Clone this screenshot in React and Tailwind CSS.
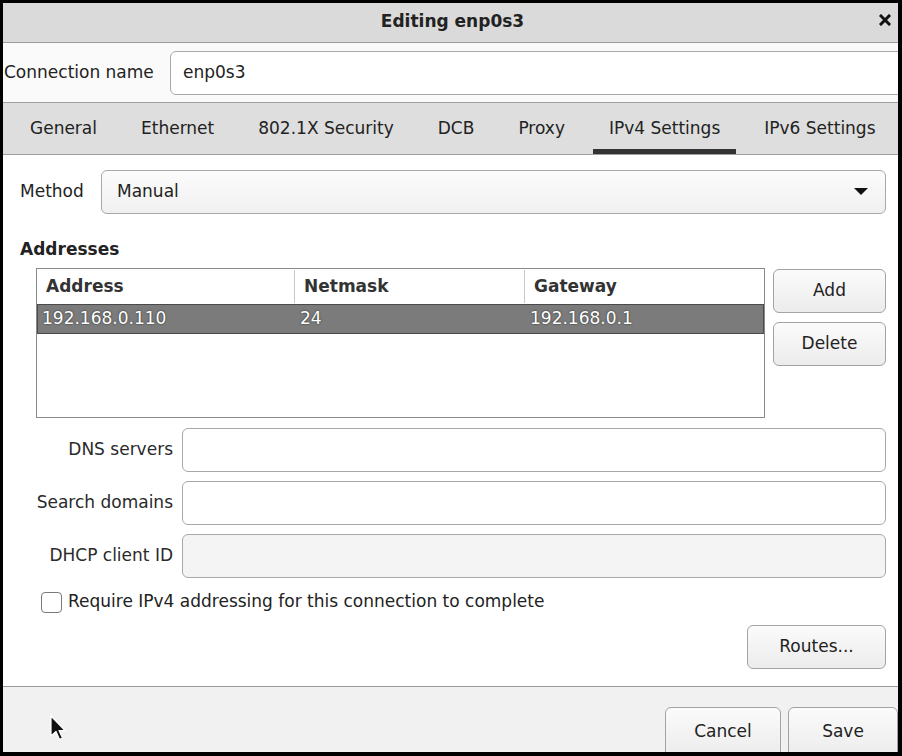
import React from 'react';

const font = { fontFamily: '"DejaVu Sans", "Liberation Sans", sans-serif' };

function Btn({ children, className = '' }) {
  return (
    <div
      className={`flex items-center justify-center rounded-[6px] border border-[#a3a3a3] bg-gradient-to-b from-[#fbfbfb] to-[#ececec] text-[17px] text-[#222] ${className}`}
    >
      {children}
    </div>
  );
}

function Field({ label, disabled }) {
  return (
    <div className="flex items-center h-[44px]">
      <div className="w-[153px] shrink-0 text-right text-[17px] text-[#2a2a2a] whitespace-nowrap">{label}</div>
      <div
        className={`ml-[9px] flex-1 h-full rounded-[6px] border border-[#a8a8a8] ${
          disabled ? 'bg-[#f4f4f4]' : 'bg-white'
        }`}
      />
    </div>
  );
}

const tabs = ['General', 'Ethernet', '802.1X Security', 'DCB', 'Proxy', 'IPv4 Settings', 'IPv6 Settings'];

export default function App() {
  return (
    <div className="w-[902px] h-[756px] bg-black pt-[3px] pl-[3px] pr-[4px] pb-[4px]" style={font}>
      <div className="flex flex-col h-full bg-white overflow-hidden relative">
        {/* title bar */}
        <div className="h-[40px] shrink-0 bg-[#dadada] border-b border-[#9c9c9c] flex items-center relative">
          <div className="flex-1 text-center font-bold text-[17px] text-[#222] pl-[4px] -mt-[2px]">Editing enp0s3</div>
          <svg className="absolute right-[7px] top-[11px]" width="12" height="12" viewBox="0 0 12 12">
            <path d="M2 2 L10 10 M10 2 L2 10" stroke="#111" strokeWidth="3" strokeLinecap="square" />
          </svg>
        </div>

        {/* connection name */}
        <div className="h-[60px] shrink-0 bg-[#fafafa] flex items-center border-b border-[#a0a0a0]">
          <div className="pl-[1px] w-[167px] shrink-0 text-[17px] text-[#222]">Connection name</div>
          <div className="flex-1 h-[44px] -mr-[10px] rounded-[6px] border border-[#a8a8a8] bg-white flex items-center pl-[12px] text-[17px] text-[#222]">
            enp0s3
          </div>
        </div>

        {/* tabs */}
        <div className="h-[52px] shrink-0 bg-[#dedede] border-b border-[#a0a0a0] flex pl-[11px] gap-[12px]">
          {tabs.map(t => (
            <div key={t} className="relative flex items-center px-[16px] text-[17px] text-[#222] whitespace-nowrap">
              {t}
              {t === 'IPv4 Settings' && (
                <div className="absolute left-0 right-0 bottom-0 h-[5px] bg-[#333]" />
              )}
            </div>
          ))}
        </div>

        {/* content */}
        <div className="flex-1 flex flex-col pl-[17px] pr-[12px] pt-[15px]">
          <div className="flex items-center h-[44px]">
            <div className="w-[81px] text-[17px] text-[#222]">Method</div>
            <div className="flex-1 h-full rounded-[6px] border border-[#a8a8a8] bg-gradient-to-b from-[#fcfcfc] to-[#f0f0f0] flex items-center pl-[15px] pr-[17px] text-[17px] text-[#222]">
              <span className="flex-1">Manual</span>
              <svg width="14" height="8" viewBox="0 0 14 8">
                <path d="M0 0 H14 L7 7 Z" fill="#111" />
              </svg>
            </div>
          </div>

          <div className="mt-[24px] font-bold text-[17px] text-[#222] leading-[22px]">Addresses</div>

          <div className="mt-[8px] flex pl-[16px] gap-[8px]">
            <div className="w-[729px] h-[150px] border border-[#8a8a8a] bg-white">
              <div className="flex h-[35px] text-[17px] font-bold text-[#333]">
                <div className="w-[258px] border-r border-[#c8c8c8] flex items-center pl-[9px] my-[1px]">Address</div>
                <div className="w-[230px] border-r border-[#c8c8c8] flex items-center pl-[9px] my-[1px]">Netmask</div>
                <div className="flex-1 flex items-center pl-[9px]">Gateway</div>
              </div>
              <div
                className="flex h-[30px] bg-[#7b7b7b] border border-[#4a4a4a] text-[17px] text-white items-center"
                style={{ textShadow: '0 0 2px #222' }}
              >
                <div className="w-[258px] pl-[4px]">192.168.0.110</div>
                <div className="w-[230px] pl-[4px]">24</div>
                <div className="flex-1 pl-[4px]">192.168.0.1</div>
              </div>
            </div>
            <div className="flex-1 flex flex-col gap-[9px] pt-[1px]">
              <Btn className="h-[44px]">Add</Btn>
              <Btn className="h-[44px]">Delete</Btn>
            </div>
          </div>

          <div className="mt-[10px] flex flex-col gap-[9px]">
            <Field label="DNS servers" />
            <Field label="Search domains" />
            <Field label="DHCP client ID" disabled />
          </div>

          <div className="mt-[13px] flex items-center pl-[21px] h-[22px]">
            <div className="w-[21px] h-[21px] rounded-[4px] border border-[#7a7a7a] bg-white" />
            <span className="ml-[6px] text-[17px] text-[#222]">Require IPv4 addressing for this connection to complete</span>
          </div>

          <div className="mt-[12px] flex justify-end">
            <Btn className="w-[139px] h-[44px]">Routes...</Btn>
          </div>
        </div>

        {/* footer */}
        <div className="h-[66px] shrink-0 bg-[#f1f1f1] border-t border-[#9a9a9a] flex justify-end items-start pt-[20px] gap-[7px] relative">
          <Btn className="w-[116px] h-[50px] rounded-b-none">Cancel</Btn>
          <Btn className="w-[110px] h-[50px] rounded-b-none">Save</Btn>
          <svg className="absolute left-[46px] top-[28px]" width="18" height="28" viewBox="0 0 18 28">
            <path d="M2 1 L2 21 L7 16.5 L10.5 24.5 L13.5 23 L10 15.5 L16 15.5 Z" fill="#111" stroke="#fff" strokeWidth="1.2" strokeLinejoin="round" />
          </svg>
        </div>
      </div>
    </div>
  );
}
